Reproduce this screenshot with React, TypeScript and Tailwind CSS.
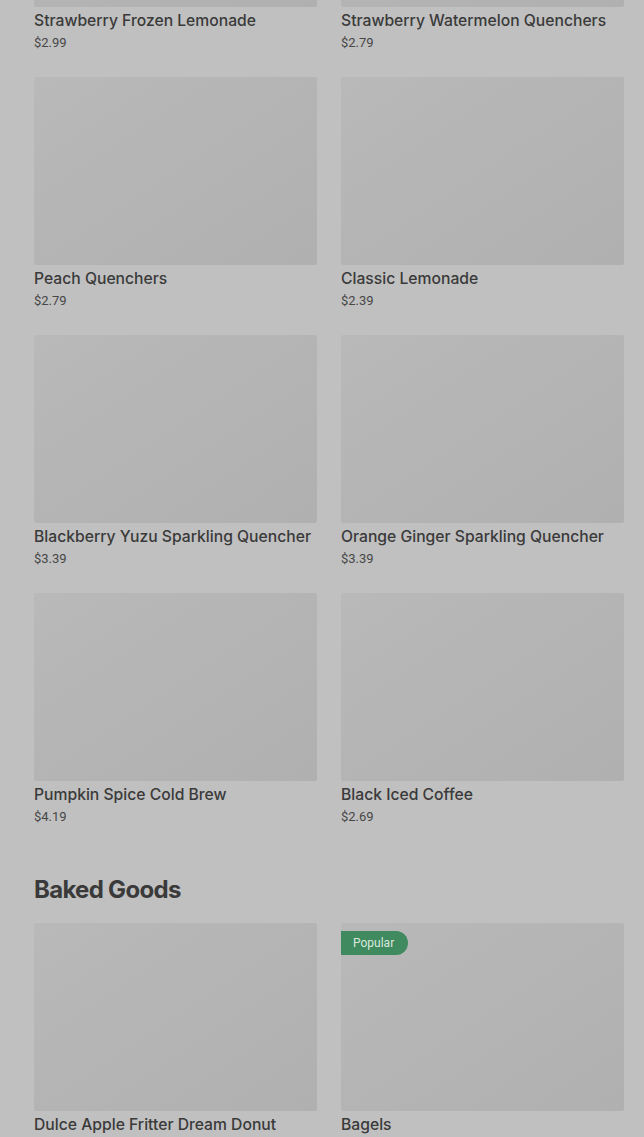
import React from "react";

type Item = { name: string; price?: string; badge?: string };

const drinks: Item[] = [
  { name: "Strawberry Frozen Lemonade", price: "$2.99" },
  { name: "Strawberry Watermelon Quenchers", price: "$2.79" },
  { name: "Peach Quenchers", price: "$2.79" },
  { name: "Classic Lemonade", price: "$2.39" },
  { name: "Blackberry Yuzu Sparkling Quencher", price: "$3.39" },
  { name: "Orange Ginger Sparkling Quencher", price: "$3.39" },
  { name: "Pumpkin Spice Cold Brew", price: "$4.19" },
  { name: "Black Iced Coffee", price: "$2.69" },
];

const baked: Item[] = [
  { name: "Dulce Apple Fritter Dream Donut" },
  { name: "Bagels", badge: "Popular" },
];

function Card({ item }: { item: Item }) {
  return (
    <div className="flex flex-col">
      <div className="relative h-[188px] rounded-[2px] bg-gradient-to-br from-[#b9b9b9] via-[#b4b4b4] to-[#b0b0b0]">
        {item.badge && (
          <span className="absolute left-0 top-[8px] flex h-[24px] items-center rounded-r-full bg-[#3f8a5f] pl-[12px] pr-[14px] text-[12px] text-[#d9e9de]">
            {item.badge}
          </span>
        )}
      </div>
      <div
        className="mt-[3px] text-[15.7px] leading-[22px] font-medium text-[#3a3a3a]"
        style={{ fontFamily: "Inter, Roboto, sans-serif" }}
      >
        {item.name}
      </div>
      {item.price && <div className="mt-[1px] text-[13px] leading-[20px] text-[#474747]">{item.price}</div>}
    </div>
  );
}

export default function App() {
  return (
    <div
      className="h-[1137px] overflow-hidden bg-[#c0c0c0] pl-[34px] pr-[20px]"
      style={{ fontFamily: "Roboto, 'Noto Sans', sans-serif" }}
    >
      <div className="mt-[-181px] grid grid-cols-2 gap-x-[24px] gap-y-[24px]">
        {drinks.map((d) => (
          <Card key={d.name} item={d} />
        ))}
      </div>
      <h2
        className="mt-[47px] mb-[17px] text-[24px] leading-[32px] font-bold tracking-[-0.7px] text-[#3a3a3a]"
        style={{ fontFamily: "Inter, sans-serif" }}
      >
        Baked Goods
      </h2>
      <div className="grid grid-cols-2 gap-x-[24px] gap-y-[24px]">
        {baked.map((d) => (
          <Card key={d.name} item={d} />
        ))}
      </div>
    </div>
  );
}
